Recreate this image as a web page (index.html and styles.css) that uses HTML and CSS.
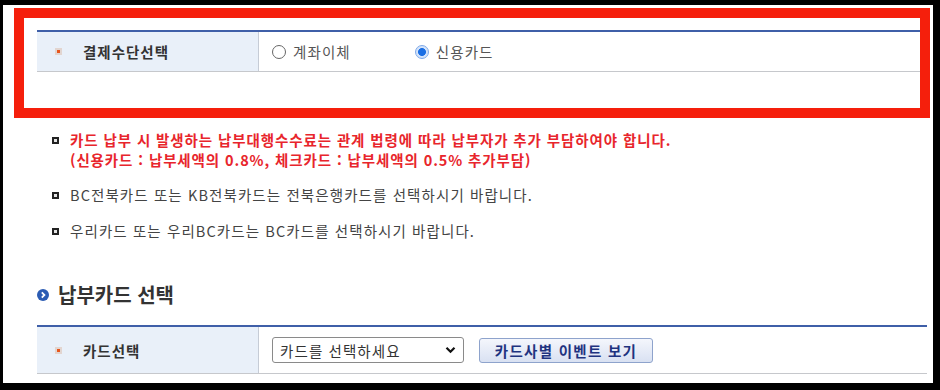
FILE: index.html
```html
<!DOCTYPE html>
<html lang="ko">
<head><meta charset="UTF-8"/><meta name="viewport" content="width=device-width, initial-scale=1.0"/>
<title>납부카드 선택</title>
<link rel="stylesheet" href="styles.css">
</head><body>
<div class="screen">
 <div class="highlight">
  <div class="row row-pay">
   <div class="label"><span class="mark"></span>결제수단선택</div>
   <div class="value">
    <label class="opt"><input type="radio" name="pay" value="acct"/>계좌이체</label>
    <label class="opt"><input type="radio" name="pay" value="card" checked/>신용카드</label>
   </div>
  </div>
 </div>
 <ul class="notes">
  <li class="warn">카드 납부 시 발생하는 납부대행수수료는 관계 법령에 따라 납부자가 추가 부담하여야 합니다.<br/>(신용카드 : 납부세액의 0.8%, 체크카드 : 납부세액의 0.5% 추가부담)</li>
  <li>BC전북카드 또는 KB전북카드는 전북은행카드를 선택하시기 바랍니다.</li>
  <li>우리카드 또는 우리BC카드는 BC카드를 선택하시기 바랍니다.</li>
 </ul>
 <h3 class="sec-title"><svg width="12" height="12" viewBox="0 0 12 12"><circle cx="6" cy="6" r="6" fill="#2b5cb3"/><path d="M4.8 3.4 L7.4 6 L4.8 8.6" fill="none" stroke="#fff" stroke-width="1.8"/></svg>납부카드 선택</h3>
 <div class="row row-card">
  <div class="label"><span class="mark"></span>카드선택</div>
  <div class="value">
   <div class="select-wrap">
    <select class="card-select"><option>카드를 선택하세요</option></select>
    <svg class="chev" width="11" height="8" viewBox="0 0 11 8"><path d="M1.5 1.8 L5.5 5.8 L9.5 1.8" fill="none" stroke="#111" stroke-width="2.2"/></svg>
   </div>
   <button class="ev-btn">카드사별 이벤트 보기</button>
  </div>
 </div>
</div>
</body></html>
```

FILE: styles.css
```css
body{margin:0;background:#000;font-family:"Noto Sans CJK KR","Noto Sans",sans-serif;color:#333;}
.screen{background:#fff;margin:5px 7px 7px 3px;height:378px;padding:3px 6px 0 34px;box-sizing:border-box;}
.highlight{margin:0 -3px 0 -23px;border:10px solid #f51f0c;height:78px;padding:12px 0 0 13px;box-sizing:content-box;}
.row{display:flex;border-top:2px solid #3f5fa8;border-bottom:1px solid #c6c8cc;}
.row-pay{height:39px;}
.row-card{height:46px;}
.label{width:221px;background:#e9f0f9;border-right:1px solid #c6ccd6;display:flex;align-items:center;font-size:14.5px;letter-spacing:1px;font-weight:bold;color:#333;}
.mark{width:7px;height:7px;background:#e2d5d0;margin:0 21px 0 18px;position:relative;}
.mark:after{content:"";position:absolute;left:2px;top:2px;width:3px;height:3px;background:#e7561e;}
.value{flex:1;display:flex;align-items:center;padding-left:13px;}
.opt{display:flex;align-items:center;font-size:14.5px;letter-spacing:1.1px;color:#555;margin-right:64px;}
.opt input{appearance:none;margin:0 7px 0 0;width:14px;height:14px;border:1px solid #666;border-radius:50%;background:#fff;}
.opt input:checked{border-color:#7faae8;background:radial-gradient(circle,#1b6fe4 0 3.6px,#d3e3fa 4.3px);}
.notes{list-style:none;margin:12px 0 0;padding:0 0 0 15px;font-size:14.5px;letter-spacing:1.1px;line-height:20px;color:#444;}
.notes li{position:relative;padding-left:18px;margin-bottom:16px;}
.notes li:before{content:"";position:absolute;left:0;top:7px;width:3px;height:3px;border:2px solid #222;background:#e4e4e4;}
.notes .warn{color:#e8252c;font-weight:bold;margin-bottom:15px;letter-spacing:0.9px;}
.sec-title{margin:42px 0 18px 0;font-size:20px;line-height:24px;font-weight:bold;color:#333;display:flex;align-items:center;gap:9px;}
.select-wrap{position:relative;}
.card-select{appearance:none;width:192px;height:26px;border:1px solid #8a8a8a;border-radius:3px;background:#fff;font-family:inherit;font-size:14.5px;letter-spacing:1.1px;color:#333;padding:0 0 0 7px;}
.chev{position:absolute;right:8px;top:9px;pointer-events:none;}
.ev-btn{margin-left:15px;height:25px;width:174px;padding:0;border:1px solid #8ea3cc;border-radius:3px;background:linear-gradient(#f4f6fc,#d9e1f2);font-family:inherit;font-size:14.5px;font-weight:bold;color:#1f3380;letter-spacing:1.3px;}
```
